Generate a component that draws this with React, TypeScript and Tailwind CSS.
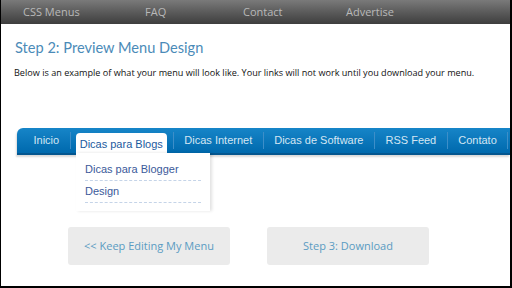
import React from 'react';

const topLinks = [
  { label: 'CSS Menus', w: 'w-[122px]' },
  { label: 'FAQ', w: 'w-[98px]' },
  { label: 'Contact', w: 'w-[103px]' },
  { label: 'Advertise', w: 'w-[100px]' },
];

const menuItems = ['Inicio', 'Dicas para Blogs', 'Dicas Internet', 'Dicas de Software', 'RSS Feed', 'Contato'];

const App: React.FC = () => {
  return (
    <div className="w-[512px] h-[288px] overflow-hidden bg-white border-l border-r-2 border-b-2 border-black font-['Open_Sans',sans-serif] flex flex-col">
      {/* top nav */}
      <div className="h-[24px] shrink-0 bg-gradient-to-b from-[#7a7a7a] to-[#3e3e3e] flex items-center pl-[22px] text-[11px] text-[#b9b9b9]">
        {topLinks.map((l) => (
          <span key={l.label} className={l.w}>{l.label}</span>
        ))}
      </div>

      <div className="pl-[13px] pt-[14px]">
        <h1 className="font-['Lato',sans-serif] text-[14.6px] leading-[20px] text-[#4b8bb8] pl-px">Step 2: Preview Menu Design</h1>
        <p className="mt-[9px] text-[9.1px] leading-[12px] text-[#111] whitespace-nowrap">
          Below is an example of what your menu will look like. Your links will not work until you download your menu.
        </p>
      </div>

      {/* preview menu */}
      <div className="mt-[49px] ml-[16px] relative shrink-0">
        <div className="h-[27px] rounded-tl-[6px] bg-gradient-to-b from-[#1685c8] to-[#0069ad] border-b-2 border-[#04568f] flex items-stretch pl-[6px] font-['Liberation_Sans',Arial,sans-serif] text-[11px] whitespace-nowrap shadow-[-1px_2px_2px_rgba(0,0,0,0.15)]">
          {menuItems.map((item, i) => {
            const active = i === 1;
            return (
              <div key={item} className="flex items-stretch">
                {active ? (
                  <div className="flex items-end pl-[5px] pr-[6px]">
                    <div className="h-[22px] mb-[-2px] px-[4px] bg-white rounded-t-[4px] text-[#1c5a9e] flex items-center z-10">
                      {item}
                    </div>
                  </div>
                ) : (
                  <div className="px-[10.5px] flex items-center text-[#d4e6f3]">{item}</div>
                )}
                <div className="self-center w-px h-[17px] bg-[#3d8ec8]" />
              </div>
            );
          })}
        </div>
        {/* dropdown */}
        <div className="absolute left-[59px] top-[25px] w-[134px] h-[58px] bg-gradient-to-b from-white via-white to-[rgba(255,255,255,0.6)] shadow-[2px_0_3px_rgba(0,0,0,0.12)] px-[9px] pt-[5px] font-['Liberation_Sans',Arial,sans-serif] text-[11px] text-[#3b5a9a] z-10">
          <div className="h-[23px] flex items-center border-b border-dashed border-[#c5d4e8]">Dicas para Blogger</div>
          <div className="h-[22px] flex items-center border-b border-dashed border-[#c5d4e8]">Design</div>
        </div>
      </div>

      {/* buttons */}
      <div className="mt-[72px] ml-[67px] flex gap-[37px]">
        <div className="w-[162px] h-[38px] rounded-[3px] bg-[#ebebeb] flex items-center justify-center text-[11px] text-[#5a9bc2]">
          &lt;&lt; Keep Editing My Menu
        </div>
        <div className="w-[162px] h-[38px] rounded-[3px] bg-[#ebebeb] flex items-center justify-center text-[11px] text-[#5a9bc2]">
          Step 3: Download
        </div>
      </div>
    </div>
  );
};

export default App;
